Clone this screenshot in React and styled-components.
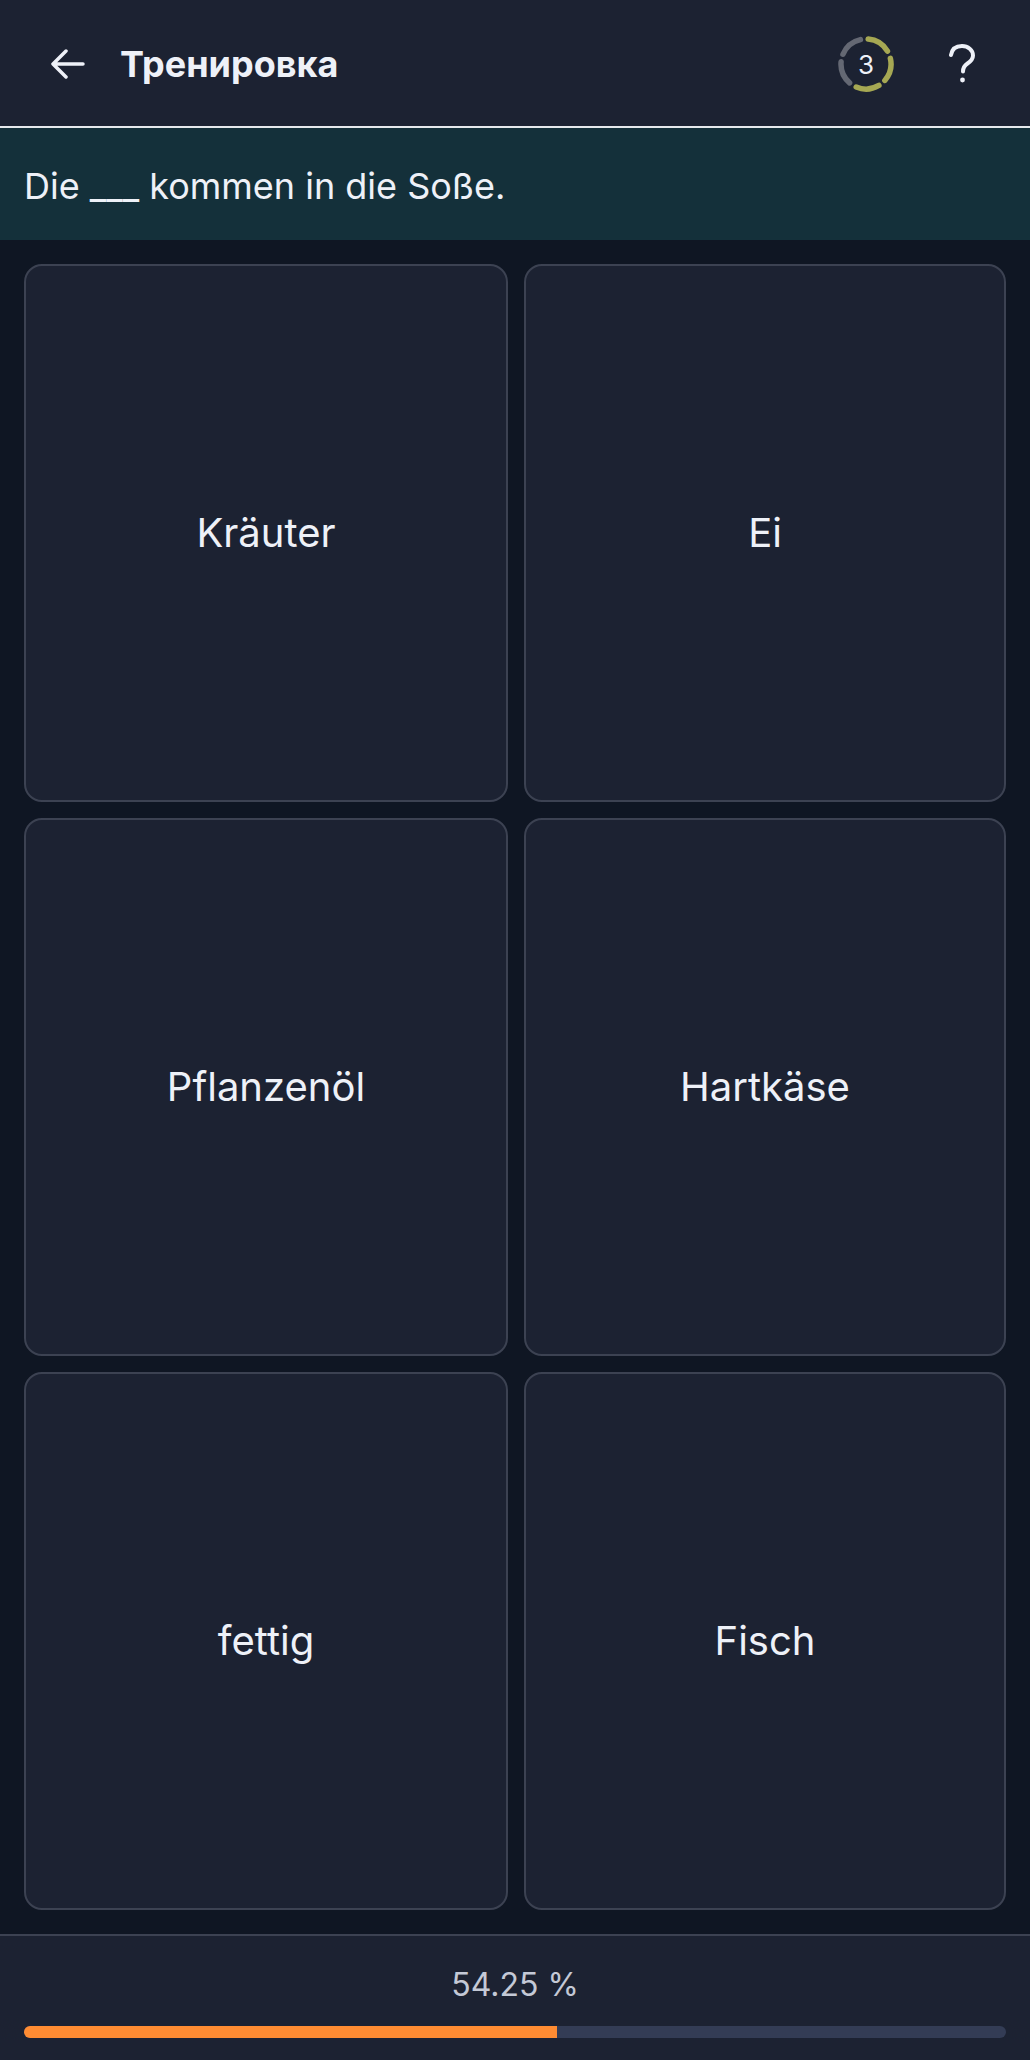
import React from "react"
import styled, { createGlobalStyle } from "styled-components"

const GlobalStyle = createGlobalStyle`
  html, body {
    margin: 0;
    padding: 0;
    background: #0f1623;
  }
  * {
    box-sizing: border-box;
  }
`

const Page = styled.div`
  width: 1030px;
  height: 2060px;
  display: flex;
  flex-direction: column;
  background: #0f1623;
  color: #eef1f8;
  font-family: Inter, "Liberation Sans", sans-serif;
`
const Header = styled.header`
  height: 128px;
  flex: none;
  display: flex;
  align-items: center;
  padding: 2px 0 0 51px;
  background: #1c2232;
  border-bottom: 2px solid #e6e8ec;
`
const Title = styled.h1`
  flex: 1;
  margin: 0 0 0 35px;
  font-size: 36px;
  line-height: 42px;
  font-weight: 700;
`
const Streak = styled.div`
  position: relative;
  width: 56px;
  height: 56px;
  margin-right: 55px;
  display: flex;
  align-items: center;
  justify-content: center;
  font-size: 26px;
`
const StreakRing = styled.svg`
  position: absolute;
  inset: 0;
`
const HelpIcon = styled.svg`
  margin-right: 55px;
`
const Prompt = styled.div`
  height: 112px;
  flex: none;
  display: flex;
  align-items: center;
  padding: 4px 24px 0;
  background: #14303a;
  font-size: 36px;
  line-height: 44px;
`
const Grid = styled.main`
  flex: 1;
  display: grid;
  grid-template-columns: 484px 482px;
  grid-auto-rows: 538px;
  gap: 16px;
  padding: 24px;
`
const Answer = styled.button`
  display: flex;
  align-items: center;
  justify-content: center;
  padding: 0 0 2px;
  border: 2px solid #3c4252;
  border-radius: 18px;
  background: #1c2232;
  color: #eef1f8;
  font-family: inherit;
  font-size: 40px;
`
const Footer = styled.footer`
  height: 126px;
  flex: none;
  display: flex;
  flex-direction: column;
  align-items: stretch;
  padding: 28px 24px 0;
  background: #1c2232;
  border-top: 2px solid #3c4252;
`
const Percent = styled.div`
  height: 42px;
  text-align: center;
  font-size: 32px;
  line-height: 42px;
  color: #c4c9d6;
`
const Track = styled.div`
  height: 12px;
  margin-top: 20px;
  border-radius: 6px;
  overflow: hidden;
  background: #333c55;
`
const Fill = styled.div`
  height: 100%;
  background: #ff8c33;
`

const answers = ["Kräuter", "Ei", "Pflanzenöl", "Hartkäse", "fettig", "Fisch"]
const progress = 54.25

// five dashes around the ring, the first three are done
const segments = [0, 1, 2, 3, 4]

const App = () => (
  <Page>
    <GlobalStyle />
    <Header>
      <svg width="34" height="30" viewBox="0 0 34 30" fill="none" stroke="#eef1f8" strokeWidth="3.5" strokeLinecap="round" strokeLinejoin="round">
        <path d="M32 15H2M15 2 2 15l13 13" />
      </svg>
      <Title>Тренировка</Title>
      <Streak>
        <StreakRing width="56" height="56" viewBox="0 0 56 56" fill="none" strokeWidth="5.5" strokeLinecap="round">
          {segments.map(i => (
            <circle
              key={i}
              cx="28"
              cy="28"
              r="25"
              pathLength="100"
              strokeDasharray="15 85"
              stroke={i < 3 ? "#a6a853" : "#646873"}
              transform={`rotate(${i * 72 - 85} 28 28)`}
            />
          ))}
        </StreakRing>
        3
      </Streak>
      <HelpIcon width="26" height="40" viewBox="0 0 26 40" fill="none" stroke="#eef1f8" strokeWidth="4" strokeLinecap="round">
        <path d="M2 11C3 5 7 2 13 2c6 0 11 4 11 9.500 0 4-2.500 6-5.500 8-3 2-4.500 4-4.500 8" />
        <circle cx="13.500" cy="36" r="2.400" fill="#eef1f8" stroke="none" />
      </HelpIcon>
    </Header>
    <Prompt>Die ___ kommen in die Soße.</Prompt>
    <Grid>
      {answers.map(a => (
        <Answer key={a}>{a}</Answer>
      ))}
    </Grid>
    <Footer>
      <Percent>{progress} %</Percent>
      <Track>
        <Fill style={{ width: `${progress}%` }} />
      </Track>
    </Footer>
  </Page>
)

export default App
